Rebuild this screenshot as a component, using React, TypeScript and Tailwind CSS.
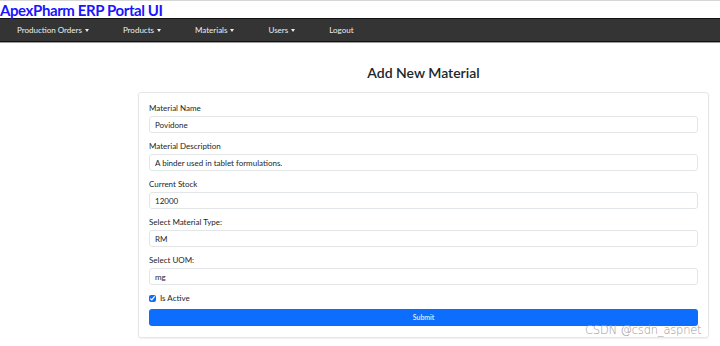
import { useState } from "react";

const navItems = [
  { label: "Production Orders", dropdown: true },
  { label: "Products", dropdown: true },
  { label: "Materials", dropdown: true },
  { label: "Users", dropdown: true },
  { label: "Logout", dropdown: false },
];

function Field({ label, value }: { label: string; value: string }) {
  return (
    <div className="flex flex-col">
      <label className="text-[8px] leading-[10px] text-[#212529] mb-[3px]">{label}</label>
      <div className="h-[17px] border border-[#e3e6e9] rounded-[3px] px-[5px] flex items-center text-[8px] text-[#212529]">
        {value}
      </div>
    </div>
  );
}

export default function App() {
  const [active, setActive] = useState(true);

  return (
    <div
      className="w-[720px] h-[346px] bg-white overflow-hidden relative"
      style={{ fontFamily: 'Lato, "Noto Sans", sans-serif' }}
    >
      <div className="border-t border-[#d6d6d6] pt-[1px]">
        <h1 className="text-[15px] leading-[16px] font-bold text-[#1a14ff] tracking-[-0.4px]">
          ApexPharm ERP Portal UI
        </h1>
      </div>
      <nav className="h-[24px] bg-[#343434] border-y border-[#121212] shadow-[0_1px_0_#9a9a9a] flex items-center pl-[17px]">
        {navItems.map((item) => (
          <div
            key={item.label}
            className="flex items-center text-[8px] text-[#eeeeee] mr-[34px]"
          >
            <span>{item.label}</span>
            {item.dropdown && (
              <span className="ml-[3px] border-x-[2.5px] border-x-transparent border-t-[3px] border-t-[#eeeeee]" />
            )}
          </div>
        ))}
      </nav>

      <div className="ml-[138px] w-[571px]">
        <h2 className="text-center text-[14px] leading-[20px] font-semibold text-[#212529] mt-[21px] mb-[9px]">
          Add New Material
        </h2>
        <div className="border border-[#e6e6e6] rounded-[3px] shadow-[0_1px_2px_rgba(0,0,0,0.06)] px-[10px] pt-[10px] pb-[11px] flex flex-col gap-[8px]">
          <Field label="Material Name" value="Povidone" />
          <Field label="Material Description" value="A binder used in tablet formulations." />
          <Field label="Current Stock" value="12000" />
          <Field label="Select Material Type:" value="RM" />
          <Field label="Select UOM:" value="mg" />
          <label className="flex items-center text-[8px] text-[#212529] -mt-[1px]">
            <input
              type="checkbox"
              checked={active}
              onChange={(e) => setActive(e.target.checked)}
              className="w-[7px] h-[7px] mr-[4px] accent-[#0d6efd]"
            />
            Is Active
          </label>
          <button className="h-[17px] -mt-[3px] bg-[#0d6efd] rounded-[3px] text-white text-[7px] flex items-center justify-center">
            Submit
          </button>
        </div>
      </div>

      <div
        className="absolute left-[585px] top-[322px] text-[11.5px] text-[#9a9a9a] tracking-[-0.2px]"
        style={{ fontFamily: '"DejaVu Sans", sans-serif', fontWeight: 200 }}
      >
        CSDN @csdn_aspnet
      </div>
    </div>
  );
}
